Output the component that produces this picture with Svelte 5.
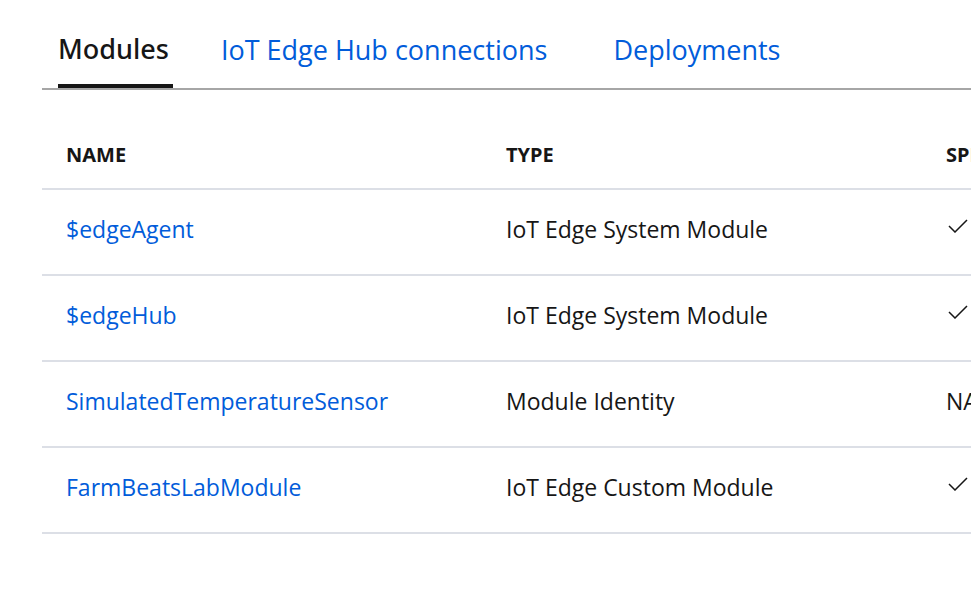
<script>
  const tabs = ['Modules', 'IoT Edge Hub connections', 'Deployments'];
  const modules = [
    { name: '$edgeAgent', type: 'IoT Edge System Module', specified: true },
    { name: '$edgeHub', type: 'IoT Edge System Module', specified: true },
    { name: 'SimulatedTemperatureSensor', type: 'Module Identity', specified: false },
    { name: 'FarmBeatsLabModule', type: 'IoT Edge Custom Module', specified: true }
  ];
  let active = $state('Modules');
</script>

<main>
  <div class="tabs" role="tablist">
    {#each tabs as tab}
      <button role="tab" aria-selected={active === tab} class:active={active === tab} onclick={() => (active = tab)}>{tab}</button>
    {/each}
  </div>
  <table>
    <thead>
      <tr><th class="wide">NAME</th><th class="wide">TYPE</th><th>SPECIFIED</th></tr>
    </thead>
    <tbody>
      {#each modules as m}
        <tr>
          <td><a href="#module">{m.name}</a></td>
          <td>{m.type}</td>
          <td>
            {#if m.specified}
              <svg viewBox="0 0 22 14" width="22" height="14" role="img" aria-label="Yes"><path d="M3 7l6 6L21 1" /></svg>
            {:else}NA{/if}
          </td>
        </tr>
      {/each}
    </tbody>
  </table>
</main>

<style>
  :global(body) { margin: 0; background: #fff; }
  main {
    padding-left: 42px;
    font-family: "Segoe UI", "Open Sans", "Noto Sans", sans-serif;
    color: #161616;
    overflow: hidden;
  }
  .tabs {
    display: flex;
    gap: 32px;
    height: 88px;
    padding-left: 16px;
    border-bottom: 2px solid #a6a6a6;
  }
  button {
    border: 0;
    border-bottom: 4px solid transparent;
    background: none;
    padding: 16px 18px 0 16px;
    font: 400 27px/36px "Segoe UI", "Open Sans", "Noto Sans", sans-serif;
    color: #015cda;
    white-space: nowrap;
  }
  button.active {
    color: #161616;
    font-family: "Segoe UI", "Noto Sans", sans-serif;
    font-weight: 500;
    padding: 14px 4px 0 0;
    border-color: #161616;
  }
  table {
    table-layout: fixed;
    width: 100%;
    min-width: 1180px;
    margin-top: 32px;
    border-collapse: separate;
    border-spacing: 0;
  }
  th, td {
    box-sizing: border-box;
    padding: 0 24px;
    text-align: left;
    white-space: nowrap;
    border-bottom: 2px solid #dcdfe6;
  }
  .wide { width: 440px; }
  th { height: 68px; padding-bottom: 2px; font-family: "Segoe UI", "Noto Sans", sans-serif; font-size: 20px; font-weight: 700; }
  td { height: 86px; padding-bottom: 6px; font-size: 23px; }
  a { color: #015cda; text-decoration: none; }
  svg { display: block; margin-bottom: 6px; fill: none; stroke: #161616; stroke-width: 1.5; }
</style>
